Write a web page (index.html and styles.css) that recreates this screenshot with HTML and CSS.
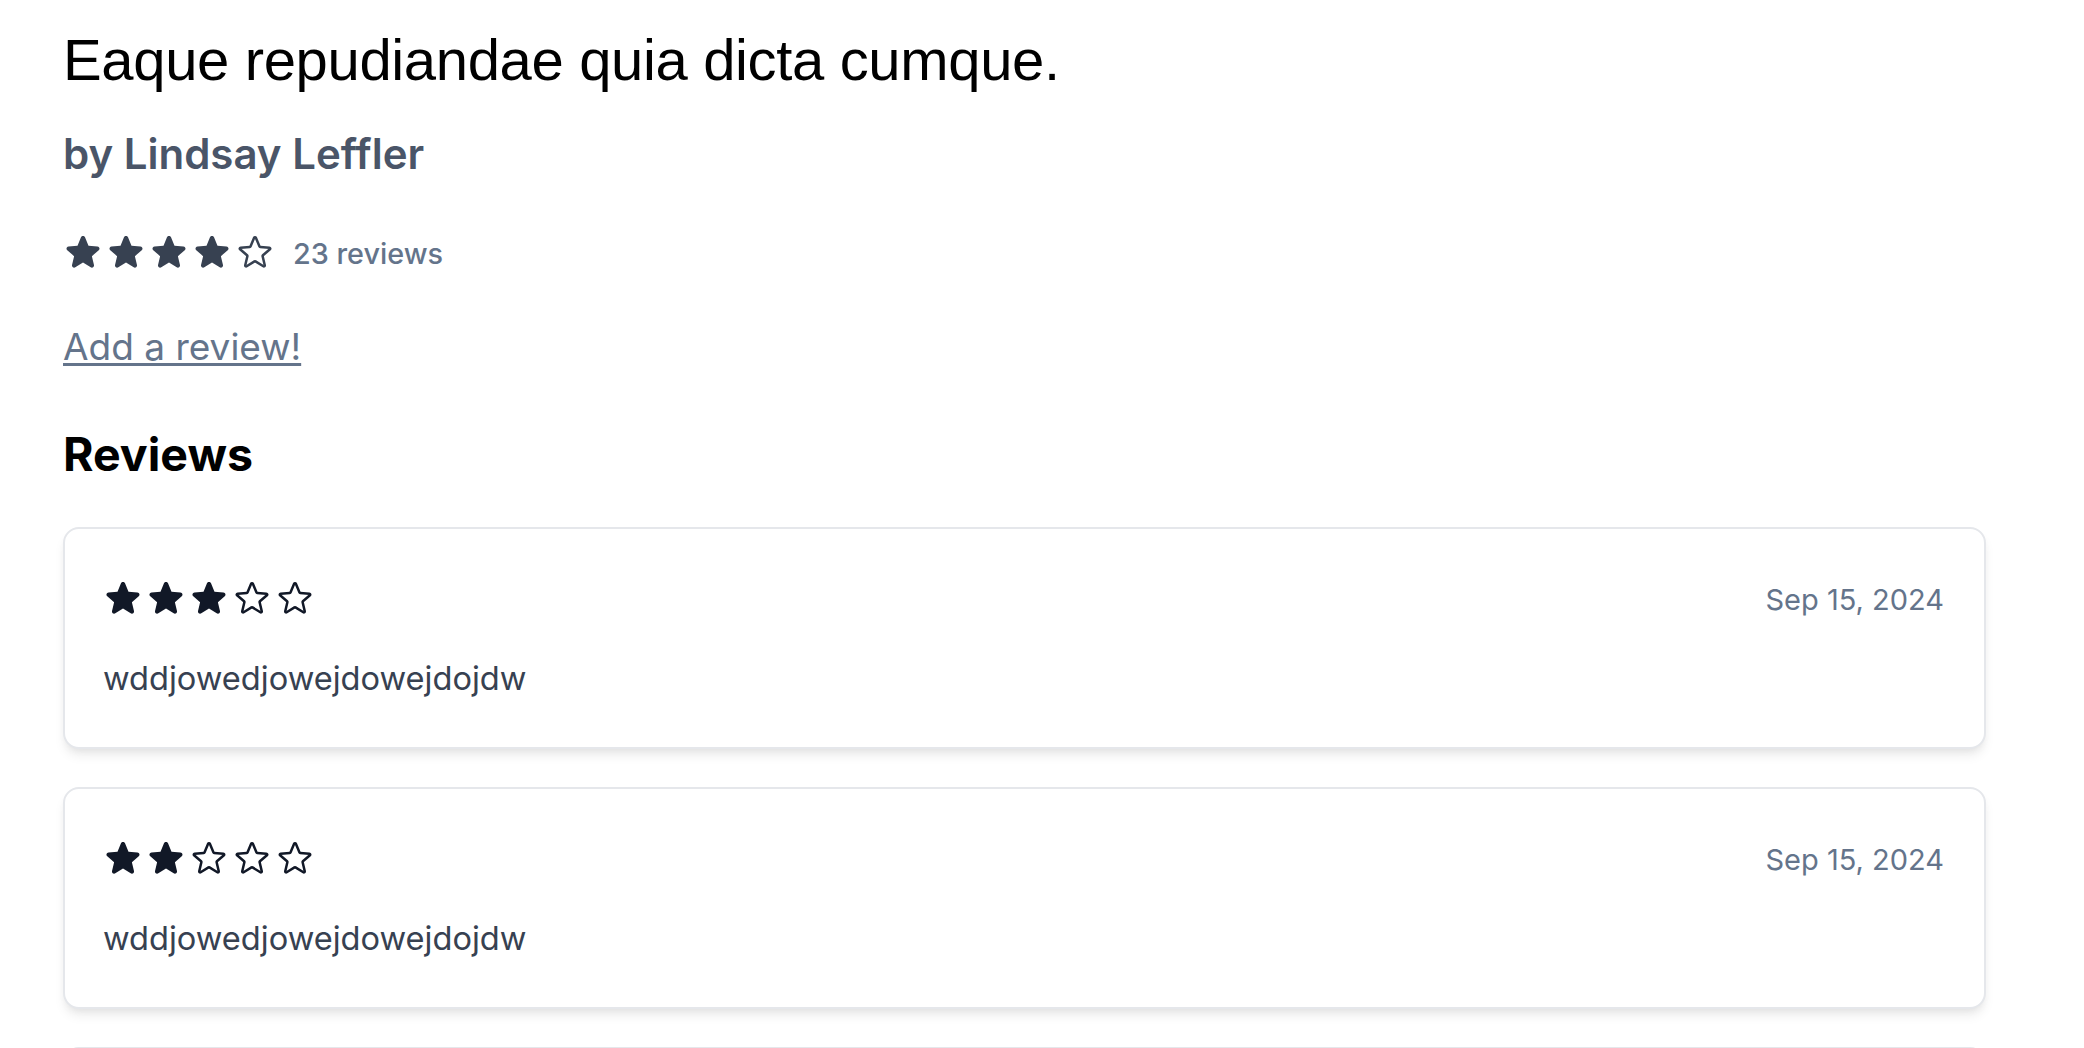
FILE: index.html
```html
<!DOCTYPE html>
<html lang="en">
<head>
<meta charset="utf-8">
<title>Eaque repudiandae quia dicta cumque.</title>
<link rel="stylesheet" href="styles.css">
</head>
<body>
<svg width="0" height="0" class="defs" aria-hidden="true">
  <defs>
    <path id="star-solid" fill-rule="evenodd" clip-rule="evenodd" d="M10.788 3.21c.448-1.077 1.976-1.077 2.424 0l2.082 5.006 5.404.434c1.164.093 1.636 1.545.749 2.305l-4.117 3.527 1.257 5.273c.271 1.136-.964 2.033-1.960 1.425L12 18.354 7.373 21.18c-.996.608-2.231-.29-1.960-1.425l1.257-5.273-4.117-3.527c-.887-.76-.415-2.212.749-2.305l5.404-.434 2.082-5.005Z"/>
    <path id="star-outline" d="M11.48 3.499a.562.562 0 0 1 1.04 0l2.125 5.111a.563.563 0 0 0 .475.345l5.518.442c.499.04.701.663.321.988l-4.204 3.602a.563.563 0 0 0-.182.557l1.285 5.385a.562.562 0 0 1-.84.61l-4.725-2.885a.562.562 0 0 0-.586 0L6.982 20.54a.562.562 0 0 1-.84-.61l1.285-5.386a.562.562 0 0 0-.182-.557l-4.204-3.602a.562.562 0 0 1 .321-.988l5.518-.442a.563.563 0 0 0 .475-.345L11.48 3.5Z"/>
  </defs>
</svg>
<main class="page">
  <h1 class="title">Eaque repudiandae quia dicta cumque.</h1>
  <h2 class="byline">by Lindsay Leffler</h2>

  <div class="summary">
    <div class="stars">
      <svg class="star" viewBox="0 0 24 24"><use href="#star-solid" class="fill"/></svg>
      <svg class="star" viewBox="0 0 24 24"><use href="#star-solid" class="fill"/></svg>
      <svg class="star" viewBox="0 0 24 24"><use href="#star-solid" class="fill"/></svg>
      <svg class="star" viewBox="0 0 24 24"><use href="#star-solid" class="fill"/></svg>
      <svg class="star" viewBox="0 0 24 24"><use href="#star-outline" class="line"/></svg>
    </div>
    <span class="count">23 reviews</span>
  </div>

  <a class="add-link" href="#">Add a review!</a>

  <h3 class="section-title">Reviews</h3>

  <ul class="reviews">
    <li class="card">
      <div class="card-head">
        <div class="stars dark">
          <svg class="star" viewBox="0 0 24 24"><use href="#star-solid" class="fill"/></svg>
          <svg class="star" viewBox="0 0 24 24"><use href="#star-solid" class="fill"/></svg>
          <svg class="star" viewBox="0 0 24 24"><use href="#star-solid" class="fill"/></svg>
          <svg class="star" viewBox="0 0 24 24"><use href="#star-outline" class="line"/></svg>
          <svg class="star" viewBox="0 0 24 24"><use href="#star-outline" class="line"/></svg>
        </div>
        <span class="date">Sep 15, 2024</span>
      </div>
      <p class="body">wddjowedjowejdowejdojdw</p>
    </li>
    <li class="card">
      <div class="card-head">
        <div class="stars dark">
          <svg class="star" viewBox="0 0 24 24"><use href="#star-solid" class="fill"/></svg>
          <svg class="star" viewBox="0 0 24 24"><use href="#star-solid" class="fill"/></svg>
          <svg class="star" viewBox="0 0 24 24"><use href="#star-outline" class="line"/></svg>
          <svg class="star" viewBox="0 0 24 24"><use href="#star-outline" class="line"/></svg>
          <svg class="star" viewBox="0 0 24 24"><use href="#star-outline" class="line"/></svg>
        </div>
        <span class="date">Sep 15, 2024</span>
      </div>
      <p class="body">wddjowedjowejdowejdojdw</p>
    </li>
    <li class="card card-peek" aria-hidden="true"></li>
  </ul>
</main>
</body>
</html>
```

FILE: styles.css
```css
* { box-sizing: border-box; }

html, body {
  margin: 0;
  padding: 0;
  background: #ffffff;
}

body {
  font-family: Inter, "Noto Sans", "Liberation Sans", sans-serif;
  overflow: hidden;
}

.defs {
  position: absolute;
  width: 0;
  height: 0;
  overflow: hidden;
}

.page {
  padding: 24px 98px 0 63px;
}

.title {
  margin: 0;
  font-family: "Liberation Sans", Arial, sans-serif;
  font-weight: 400;
  font-size: 58px;
  line-height: 72px;
  letter-spacing: -0.35px;
  color: #000000;
}

.byline {
  margin: 30px 0 0;
  font-weight: 600;
  font-size: 42px;
  line-height: 56px;
  letter-spacing: 0;
  color: #4a5568;
}

.summary {
  margin-top: 48px;
  display: flex;
  align-items: center;
}

.stars {
  display: flex;
  gap: 3px;
  color: #374151;
}

.stars.dark {
  color: #111827;
}

.star {
  width: 40px;
  height: 40px;
  display: block;
}

.star .fill {
  fill: currentColor;
}

.star .line {
  fill: none;
  stroke: currentColor;
  stroke-width: 1.5;
  stroke-linecap: round;
  stroke-linejoin: round;
}

.count {
  margin-left: 18px;
  padding-top: 4px;
  font-weight: 500;
  font-size: 28.8px;
  line-height: 40px;
  color: #64748b;
}

.add-link {
  display: inline-block;
  margin-top: 45px;
  font-size: 37px;
  line-height: 56px;
  color: #64748b;
  text-decoration: underline;
  text-decoration-thickness: 3px;
  text-underline-offset: 3px;
}

.section-title {
  margin: 47px 0 0;
  font-weight: 700;
  font-size: 46.5px;
  line-height: 64px;
  color: #000000;
}

.reviews {
  list-style: none;
  margin: 41px 0 0;
  padding: 0;
  display: flex;
  flex-direction: column;
  gap: 38px;
}

.card {
  border: 2px solid #e5e7eb;
  border-radius: 16px;
  background: #ffffff;
  padding: 46px 40px 0 38px;
  height: 222px;
  box-shadow: 0 8px 12px -2px rgba(0, 0, 0, 0.08), 0 4px 8px -4px rgba(0, 0, 0, 0.08);
}

.card-head {
  display: flex;
  align-items: center;
  justify-content: space-between;
}

.date {
  font-size: 29px;
  line-height: 40px;
  padding-top: 5px;
  color: #64748b;
}

.body {
  margin: 34px 0 0;
  font-size: 32.6px;
  line-height: 48px;
  color: #374151;
}
```
